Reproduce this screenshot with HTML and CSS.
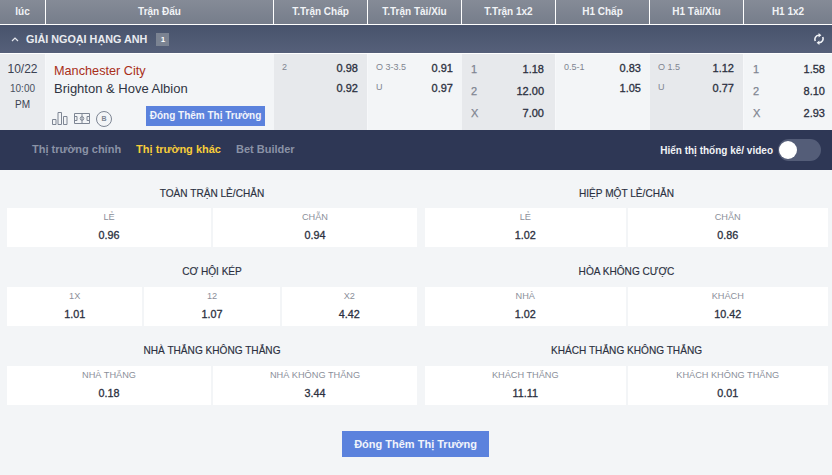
FILE: index.html
```html
<!DOCTYPE html>
<html lang="vi">
<head>
<meta charset="utf-8">
<title>Giải Ngoại Hạng Anh</title>
<link rel="stylesheet" href="styles.css">
</head>
<body>
<div class="head">
  <div class="hc c-time">lúc</div>
  <div class="hc c-match">Trận Đấu</div>
  <div class="hc c-odd">T.Trận Chấp</div>
  <div class="hc c-odd">T.Trận Tài/Xỉu</div>
  <div class="hc c-odd">T.Trận 1x2</div>
  <div class="hc c-odd">H1 Chấp</div>
  <div class="hc c-odd">H1 Tài/Xỉu</div>
  <div class="hc c-last">H1 1x2</div>
</div>
<div class="league">
  <svg class="chev" width="8" height="5" viewBox="0 0 8 5"><path d="M1 4l3-3 3 3" fill="none" stroke="#e6e8ee" stroke-width="1.2"/></svg>
  <span class="league-name">GIẢI NGOẠI HẠNG ANH</span>
  <span class="badge">1</span>
  <svg class="refresh" width="10" height="12" viewBox="0 0 10 12"><path d="M1.300 8A4 4 0 0 1 5 2.300M8.700 4A4 4 0 0 1 5 9.700" fill="none" stroke="#f0f2f6" stroke-width="1.600"/><path d="M4.600 0v4.600l2.800-2.300zM5.400 12V7.400L2.600 9.700z" fill="#f0f2f6"/></svg>
</div>
<div class="match">
  <div class="c-time when">
    <div class="date">10/22</div>
    <div class="hour">10:00</div>
    <div class="ampm">PM</div>
  </div>
  <div class="c-match teams">
    <div class="home">Manchester City</div>
    <div class="away">Brighton &amp; Hove Albion</div>
    <div class="tools">
      <svg class="ico-bars" width="16" height="13" viewBox="0 0 16 13"><path d="M.5 7.500h3.500v5H.5zM6 .5h3.500v12H6zM11.500 4.500H15v8h-3.500z" fill="none" stroke="#7e8694"/></svg>
      <svg class="ico-pitch" width="16" height="11" viewBox="0 0 16 11"><path d="M.5.5h15v10H.5zM8 .5v10M.5 3.500h2.500v4H.5zM15.500 3.500H13v4h2.500z" fill="none" stroke="#7e8694"/><circle cx="8" cy="5.500" r="1.800" fill="none" stroke="#7e8694"/></svg>
      <span class="ico-b">B</span>
      <span class="close-small">Đóng Thêm Thị Trường</span>
    </div>
  </div>
  <div class="c-odd cell dark two">
    <div class="ln"><span class="lab">2</span><b>0.98</b></div>
    <div class="ln"><span class="lab"></span><b>0.92</b></div>
  </div>
  <div class="c-odd cell two">
    <div class="ln"><span class="lab">O 3-3.5</span><b>0.91</b></div>
    <div class="ln"><span class="lab">U</span><b>0.97</b></div>
  </div>
  <div class="c-odd cell dark three">
    <div class="ln"><span class="big">1</span><b>1.18</b></div>
    <div class="ln"><span class="big">2</span><b>12.00</b></div>
    <div class="ln"><span class="big">X</span><b>7.00</b></div>
  </div>
  <div class="c-odd cell two">
    <div class="ln"><span class="lab">0.5-1</span><b>0.83</b></div>
    <div class="ln"><span class="lab"></span><b>1.05</b></div>
  </div>
  <div class="c-odd cell dark two">
    <div class="ln"><span class="lab">O 1.5</span><b>1.12</b></div>
    <div class="ln"><span class="lab">U</span><b>0.77</b></div>
  </div>
  <div class="c-last cell three last">
    <div class="ln"><span class="big">1</span><b>1.58</b></div>
    <div class="ln"><span class="big">2</span><b>8.10</b></div>
    <div class="ln"><span class="big">X</span><b>2.93</b></div>
  </div>
</div>
<div class="nav">
  <a class="tab">Thị trường chính</a>
  <a class="tab active">Thị trường khác</a>
  <a class="tab">Bet Builder</a>
  <div class="toggle-wrap">
    <span class="toggle-label">Hiển thị thống kê/ video</span>
    <span class="toggle"><span class="knob"></span></span>
  </div>
</div>
<div class="markets">
  <section class="market">
    <h3>TOÀN TRẬN LẺ/CHẴN</h3>
    <div class="tiles">
      <div class="tile"><span>LẺ</span><b>0.96</b></div>
      <div class="tile"><span>CHẴN</span><b>0.94</b></div>
    </div>
  </section>
  <section class="market">
    <h3>HIỆP MỘT LẺ/CHẴN</h3>
    <div class="tiles">
      <div class="tile"><span>LẺ</span><b>1.02</b></div>
      <div class="tile"><span>CHẴN</span><b>0.86</b></div>
    </div>
  </section>
  <section class="market">
    <h3>CƠ HỘI KÉP</h3>
    <div class="tiles">
      <div class="tile"><span>1X</span><b>1.01</b></div>
      <div class="tile"><span>12</span><b>1.07</b></div>
      <div class="tile"><span>X2</span><b>4.42</b></div>
    </div>
  </section>
  <section class="market">
    <h3>HÒA KHÔNG CƯỢC</h3>
    <div class="tiles">
      <div class="tile"><span>NHÀ</span><b>1.02</b></div>
      <div class="tile"><span>KHÁCH</span><b>10.42</b></div>
    </div>
  </section>
  <section class="market">
    <h3>NHÀ THẮNG KHÔNG THẮNG</h3>
    <div class="tiles">
      <div class="tile"><span>NHÀ THẮNG</span><b>0.18</b></div>
      <div class="tile"><span>NHÀ KHÔNG THẮNG</span><b>3.44</b></div>
    </div>
  </section>
  <section class="market">
    <h3>KHÁCH THẮNG KHÔNG THẮNG</h3>
    <div class="tiles">
      <div class="tile"><span>KHÁCH THẮNG</span><b>11.11</b></div>
      <div class="tile"><span>KHÁCH KHÔNG THẮNG</span><b>0.01</b></div>
    </div>
  </section>
</div>
<div class="foot"><button class="close-big">Đóng Thêm Thị Trường</button></div>
</body>
</html>
```

FILE: styles.css
```css
* { box-sizing: border-box; }
html, body { margin: 0; padding: 0; }
body {
  width: 832px;
  height: 475px;
  overflow: hidden;
  background: #f3f5f7;
  font-family: "Liberation Sans", Arial, sans-serif;
  color: #2b3040;
}
.c-time { width: 46px; flex: none; }
.c-match { width: 228px; flex: none; }
.c-odd { width: 94px; flex: none; }
.c-last { flex: 1; }

.head {
  display: flex;
  height: 25px;
  background: linear-gradient(#858b97, #767d8b);
  border-bottom: 1px solid #fff;
}
.hc {
  display: flex;
  align-items: center;
  justify-content: center;
  font-size: 10px;
  font-weight: 700;
  color: #f1f3f6;
  border-right: 1px solid #fff;
  padding-bottom: 1px;
}
.hc.c-last { border-right: 0; }

.league {
  display: flex;
  align-items: center;
  height: 28px;
  background: linear-gradient(#48536c, #56607a);
  padding: 0 8px 0 11px;
}
.chev { margin-right: 7px; }
.league-name { font-size: 10.8px; font-weight: 700; color: #e9ebf0; }
.badge {
  margin-left: 9px;
  width: 13px;
  height: 13px;
  background: #7b8392;
  color: #fff;
  font-size: 8px;
  font-weight: 700;
  text-align: center;
  line-height: 13px;
}
.refresh { margin-left: auto; }

.match { display: flex; height: 77px; border-top: 1px solid #fff; background: #f3f5f7; }
.when { background: #e9ebee; text-align: center; padding-top: 8px; border-right: 1px solid #f7f8fa; }
.date { font-size: 12px; color: #3b4252; line-height: 14px; }
.hour { font-size: 10px; color: #4a5160; line-height: 13px; margin-top: 6px; }
.ampm { font-size: 10px; color: #3b4252; line-height: 13px; margin-top: 3px; }

.teams { padding: 9px 0 0 8px; display: flex; flex-direction: column; }
.home { font-size: 12.7px; color: #a92f1a; line-height: 16px; }
.away { font-size: 13px; color: #2f3442; line-height: 16px; margin-top: 2px; }
.tools { display: flex; align-items: flex-end; margin-top: 6px; height: 24px; }
.ico-bars { margin-left: -2px; margin-bottom: 2px; }
.ico-pitch { margin-left: 6px; margin-bottom: 3px; }
.ico-b {
  margin-left: 6px;
  width: 16px;
  height: 16px;
  border: 1px solid #7e8694;
  border-radius: 50%;
  font-size: 7px;
  font-weight: 700;
  color: #7e8694;
  text-align: center;
  line-height: 14px;
}
.close-small {
  margin-left: 34px;
  width: 119px;
  height: 20px;
  margin-bottom: 1px;
  background: #5b82dd;
  color: #f1f4fb;
  font-size: 10px;
  font-weight: 700;
  line-height: 20px;
  text-align: center;
  white-space: nowrap;
}

.cell { padding: 0 9px 0 8px; }
.dark { background: #e7e9ec; border-right: 1px solid #f7f8fa; }
.ln { display: flex; justify-content: space-between; }
.ln b { font-size: 11px; font-weight: 400; color: #2b3040; -webkit-text-stroke: .3px #2b3040; }
.lab { font-size: 9px; color: #7f8591; padding-bottom: 3px; }
.big { font-size: 11px; color: #7f8591; -webkit-text-stroke: .25px #7f8591; }
.two { padding-top: 4px; }
.two .ln { height: 20px; align-items: center; }
.three { padding-top: 4px; padding-left: 9px; padding-right: 11px; }
.three.last { padding-right: 7px; }
.three .ln { height: 22px; align-items: center; }

.nav {
  display: flex;
  align-items: center;
  height: 40px;
  background: #2e3755;
  padding: 0 11px 0 32px;
}
.tab {
  font-size: 11px;
  font-weight: 700;
  color: #8a92a6;
  margin-right: 15px;
  padding-bottom: 2px;
}
.tab.active { color: #f7cd3a; }
.toggle-wrap { margin-left: auto; display: flex; align-items: center; }
.toggle-label { font-size: 10px; font-weight: 700; color: #f1f3f6; margin-right: 5px; }
.toggle {
  display: block;
  width: 43px;
  height: 22px;
  background: #545d78;
  border-radius: 11px;
  padding: 2px 1px;
}
.knob { display: block; width: 18px; height: 18px; background: #fff; border-radius: 50%; }

.markets {
  display: grid;
  grid-template-columns: 410px 403px;
  column-gap: 8px;
  padding: 0 4px 0 7px;
}
.market { height: 79px; }
.market h3 {
  margin: 0;
  height: 38px;
  padding-top: 17px;
  font-size: 10.1px;
  line-height: 13px;
  font-weight: 400;
  color: #2b3040;
  text-align: center;
  -webkit-text-stroke: .15px #2b3040;
}
.market:nth-child(n+3) h3 { padding-top: 16px; }
.tiles { display: flex; gap: 2px; height: 39px; }
.tile {
  flex: 1 1 0;
  background: #fff;
  display: flex;
  flex-direction: column;
  align-items: center;
  padding-top: 3px;
}
.tile span { font-size: 9.2px; line-height: 12px; color: #8b8f9a; }
.tile b { font-size: 10.8px; line-height: 13px; margin-top: 6px; font-weight: 400; color: #2b3040; -webkit-text-stroke: .3px #2b3040; }

.foot { display: flex; justify-content: center; padding: 24px 1px 0 0; }
.close-big {
  width: 147px;
  height: 26px;
  border: 0;
  padding: 0;
  background: #5b82dd;
  color: #f1f4fb;
  font-family: inherit;
  font-size: 11px;
  font-weight: 700;
}
```
